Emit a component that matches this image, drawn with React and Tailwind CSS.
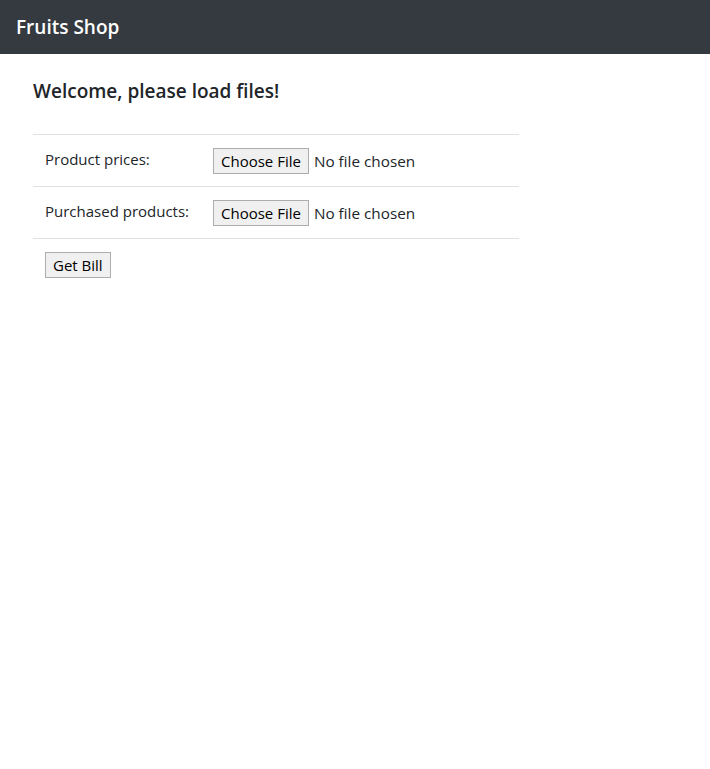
import { useState } from "react";

const font = { fontFamily: '"Open Sans", "Noto Sans", Arial, sans-serif' };

function FilePicker({ name }) {
    const [file, setFile] = useState(null);
    return (
        <label className="inline-flex cursor-pointer items-center gap-[5px]">
            <span className="h-[26px] border border-[#adadad] bg-[#f0f0f0] px-[7px] text-[15px] leading-[24px] text-black">
                Choose File
            </span>
            <span className="text-[15.3px] leading-[26px] text-[#212529]">{file ? file : "No file chosen"}</span>
            <input
                type="file"
                name={name}
                className="hidden"
                onChange={(e) => setFile(e.target.files?.[0]?.name || null)}
            />
        </label>
    );
}

export default function App() {
    const rows = [
        { label: "Product prices:", name: "prices" },
        { label: "Purchased products:", name: "purchases" },
    ];

    return (
        <div className="min-h-screen bg-white text-[#212529]" style={font}>
            <nav className="flex h-[54px] items-center bg-[#343a40] px-4">
                <span className="text-[19px] font-semibold text-white">Fruits Shop</span>
            </nav>

            <div className="px-[33px] pt-[24px]">
                <h5 className="text-[19px] font-semibold leading-[26px]">Welcome, please load files!</h5>

                <div className="mt-[30px] w-[486px]">
                    {rows.map((row) => (
                        <div key={row.name} className="grid h-[52px] grid-cols-[168px_1fr] border-t border-[#dee2e6]">
                            <div className="whitespace-nowrap px-3 pt-[12px] text-[15px] leading-[24px]">{row.label}</div>
                            <div className="px-3 pt-[13px]">
                                <FilePicker name={row.name} />
                            </div>
                        </div>
                    ))}
                    <div className="border-t border-[#dee2e6] px-3 pt-[13px]">
                        <button
                            type="button"
                            className="h-[26px] border border-[#adadad] bg-[#f0f0f0] px-[7px] text-[15px] leading-[24px] text-black"
                        >
                            Get Bill
                        </button>
                    </div>
                </div>
            </div>
        </div>
    );
}
